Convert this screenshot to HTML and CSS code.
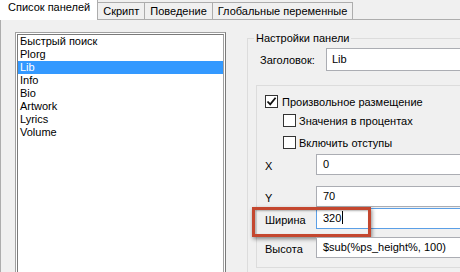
FILE: index.html
```html
<!DOCTYPE html>
<html lang="ru">

<head>
    <meta charset="UTF-8">
    <title>Настройки панелей</title>
    <link rel="stylesheet" href="styles.css">
</head>

<body>
    <div class="dialog">
        <div class="tabs">
            <div class="tab active">Список панелей</div>
            <div class="tab">Скрипт</div>
            <div class="tab">Поведение</div>
            <div class="tab">Глобальные переменные</div>
        </div>

        <div class="page">
            <div class="listbox">
                <ul class="list">
                    <li>Быстрый поиск</li>
                    <li>Plorg</li>
                    <li class="selected">Lib</li>
                    <li>Info</li>
                    <li>Bio</li>
                    <li>Artwork</li>
                    <li>Lyrics</li>
                    <li>Volume</li>
                </ul>
            </div>

            <fieldset class="group">
                <legend>Настройки панели</legend>

                <div class="title-row">
                    <span class="title-label">Заголовок:</span>
                    <div class="field title-field">Lib</div>
                </div>

                <div class="inner">
                    <div class="check first">
                        <span class="box">
                            <svg width="11" height="11" viewBox="0 0 11 11">
                                <path d="M1.5 5.5 L4.2 8.4 L9.6 1.8" fill="none" stroke="#111" stroke-width="1.8" />
                            </svg>
                        </span>
                        <span>Произвольное размещение</span>
                    </div>
                    <div class="check sub second">
                        <span class="box"></span>
                        <span>Значения в процентах</span>
                    </div>
                    <div class="check sub third">
                        <span class="box"></span>
                        <span>Включить отступы</span>
                    </div>

                    <div class="row row-x">
                        <span class="row-label">X</span>
                        <div class="field">0</div>
                    </div>
                    <div class="row row-y">
                        <span class="row-label">Y</span>
                        <div class="field">70</div>
                    </div>
                    <div class="row row-w">
                        <span class="row-label">Ширина</span>
                        <div class="field focused">320<span class="caret"></span></div>
                        <div class="mark"></div>
                    </div>
                    <div class="row row-h">
                        <span class="row-label">Высота</span>
                        <div class="field">$sub(%ps_height%, 100)</div>
                    </div>
                </div>
            </fieldset>
        </div>
    </div>
</body>

</html>
```

FILE: styles.css
```css
body {
    margin: 0;
    padding: 0;
    font-family: "Liberation Sans", Arial, sans-serif;
    font-size: 11px;
    color: #000;
    background-color: #f0f0f0;
}

.dialog {
    width: 460px;
    height: 272px;
    overflow: hidden;
    display: flex;
    flex-direction: column;
}

/* tabs */

.tabs {
    display: flex;
    align-items: flex-end;
    height: 20px;
    margin-bottom: -1px;
}

.tab {
    height: 17px;
    line-height: 17px;
    padding: 0 5px;
    background-color: #f0f0f0;
    border: 1px solid #adadad;
    border-bottom: none;
    margin-left: -1px;
    white-space: nowrap;
}

.tab.active {
    position: relative;
    z-index: 1;
    height: 20px;
    line-height: 15px;
    margin-left: 0;
    padding: 0 7px;
    background-color: #fff;
    border-left-color: #fff;
}

/* page */

.page {
    flex: 1;
    display: flex;
    gap: 21px;
    padding: 12px 0 0 14px;
    border-top: 1px solid #adadad;
    border-left: 1px solid #adadad;
    background-color: #f0f0f0;
}

.listbox {
    width: 211px;
    height: 260px;
    flex-shrink: 0;
    border: 1px solid #a0a0a0;
    border-right-color: #7a7a7a;
    background-color: #fff;
    padding: 1px;
    box-sizing: border-box;
}

.list {
    list-style-type: none;
    margin: 0;
    padding: 0;
    height: 100%;
    border: 1px solid #7a7a7a;
    border-right-color: #a0a0a0;
    box-sizing: border-box;
}

.list li {
    height: 13px;
    line-height: 13px;
    padding-left: 2px;
    white-space: nowrap;
}

.list li.selected {
    background-color: #3399ff;
    color: #fff;
}

/* panel settings */

.group {
    width: 260px;
    height: 260px;
    flex-shrink: 0;
    margin: 0;
    padding: 0 0 0 6px;
    border: 1px solid #dcdcdc;
    min-width: 0;
    box-sizing: border-box;
}

.group legend {
    padding: 0 2px;
    line-height: 13px;
}

.title-row {
    display: flex;
    align-items: center;
    margin: 3px 0 0 6px;
}

.title-label {
    width: 66px;
}

.field {
    height: 21px;
    line-height: 19px;
    padding-left: 6px;
    flex: 1;
    background-color: #fff;
    border: 1px solid #abadb3;
    box-sizing: border-box;
    white-space: nowrap;
    overflow: hidden;
}

.title-field {
    height: 23px;
    line-height: 21px;
    padding-left: 5px;
}

.field.focused {
    border-color: #5b9fe6;
}

.caret {
    display: inline-block;
    width: 1px;
    height: 13px;
    margin-left: 1px;
    vertical-align: -2px;
    background-color: #000;
}

.inner {
    margin: 14px 0 0 2px;
    height: 183px;
    padding: 0 0 0 8px;
    border: 1px solid #dcdcdc;
    box-sizing: border-box;
}

.check {
    display: flex;
    align-items: center;
    gap: 4px;
    height: 13px;
    white-space: nowrap;
}

.check.first {
    margin-top: 9px;
}

.check.second {
    margin-top: 6px;
    gap: 3px;
}

.check.third {
    margin-top: 9px;
    gap: 3px;
}

.check.sub {
    margin-left: 18px;
}

.box {
    width: 13px;
    height: 13px;
    flex-shrink: 0;
    display: flex;
    align-items: center;
    justify-content: center;
    background-color: #fff;
    border: 1px solid #333;
    box-sizing: border-box;
}

.row {
    display: flex;
    align-items: center;
    position: relative;
}

.row-label {
    width: 51px;
    flex-shrink: 0;
    padding-top: 2px;
}

.row-x {
    margin-top: 5px;
}

.row-y {
    margin-top: 11px;
}

.row-w {
    margin-top: 1px;
}

.row-h {
    margin-top: 8px;
}

/* annotation frame round the width row */

.mark {
    position: absolute;
    left: -13px;
    top: -1px;
    width: 119px;
    height: 30px;
    border: 3px solid #c4472f;
    box-sizing: border-box;
    box-shadow: 1px 2px 4px rgba(0, 0, 0, 0.45), inset 1px 1px 2px rgba(0, 0, 0, 0.3);
}
```
